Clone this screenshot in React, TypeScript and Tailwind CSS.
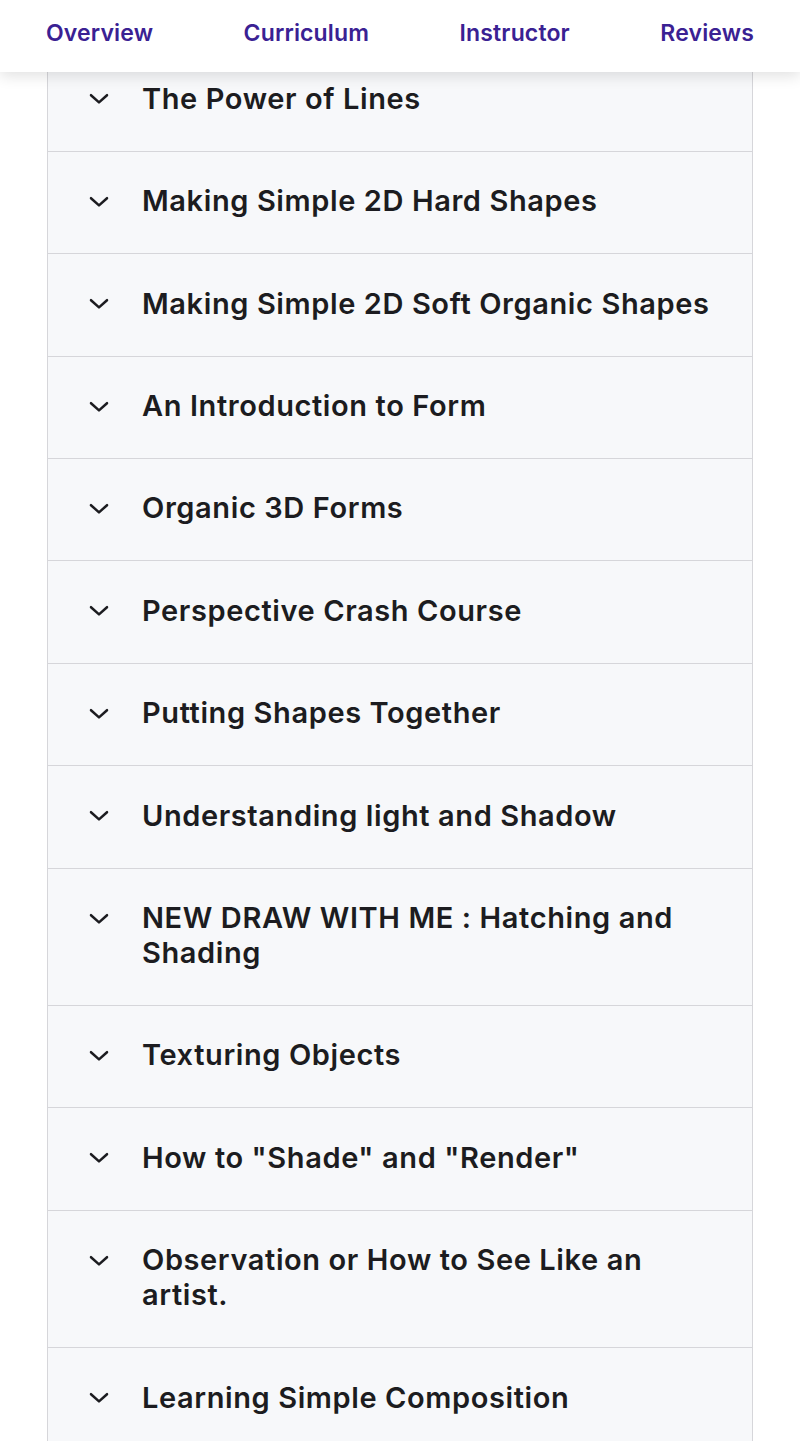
import React from "react";

const items: string[] = [
  "The Power of Lines",
  "Making Simple 2D Hard Shapes",
  "Making Simple 2D Soft Organic Shapes",
  "An Introduction to Form",
  "Organic 3D Forms",
  "Perspective Crash Course",
  "Putting Shapes Together",
  "Understanding light and Shadow",
  "NEW DRAW WITH ME : Hatching and Shading",
  "Texturing Objects",
  'How to "Shade" and "Render"',
  "Observation or How to See Like an artist.",
  "Learning Simple Composition",
];

function Chevron() {
  return (
    <svg width="20" height="20" viewBox="0 0 20 20" fill="none" className="shrink-0">
      <path d="M2 6.2 L10 13.4 L18 6.2" stroke="#1c1c20" strokeWidth="2.5" strokeLinecap="round" strokeLinejoin="round" />
    </svg>
  );
}

export default function App() {
  return (
    <div className="relative w-[800px] h-[1441px] overflow-hidden bg-white" style={{ fontFamily: 'Inter, "Noto Sans", sans-serif' }}>
      <div className="absolute top-0 left-0 right-0 z-10 h-[72px] bg-white flex items-center justify-between px-[46px] shadow-[0_4px_14px_rgba(0,0,0,0.12)]">
        {["Overview", "Curriculum", "Instructor", "Reviews"].map((t) => (
          <span key={t} className="text-[23px] font-semibold text-[#3a2193] leading-none pb-[6px] tracking-[0.15px]">
            {t}
          </span>
        ))}
      </div>
      <div className="pt-[49.5px] px-[47px]">
        <div className="border-x border-[#d6d6da] bg-[#f7f8fa]">
          {items.map((t, i) => (
            <div key={i} className="flex items-start border-b border-[#d6d6da] pt-[31.4px] pb-[35px] pl-[41px] pr-[30px]">
              <div className="h-[33px] mt-[2px] flex items-center w-[53px] shrink-0">
                <Chevron />
              </div>
              <span className="text-[29px] leading-[35px] font-semibold tracking-[0.6px] text-[#1c1c20]">{t}</span>
            </div>
          ))}
        </div>
      </div>
    </div>
  );
}
